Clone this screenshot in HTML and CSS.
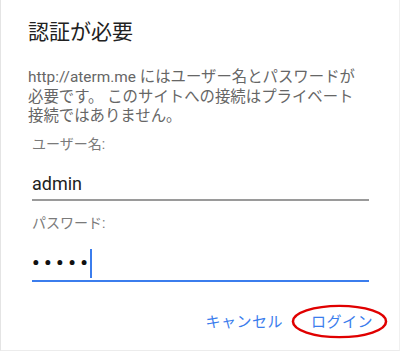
FILE: index.html
```html
<!DOCTYPE html>
<html lang="ja">
<head>
<meta charset="utf-8">
<link rel="stylesheet" href="styles.css">
</head>
<body>
<div class="dialog">
  <h1 class="title">認証が必要</h1>
  <p class="message">http://aterm.me にはユーザー名とパスワードが<br>必要です。 このサイトへの接続はプライベート<br>接続ではありません。</p>
  <div class="field">
    <label class="label">ユーザー名:</label>
    <div class="input">admin</div>
  </div>
  <div class="field">
    <label class="label">パスワード:</label>
    <div class="input focused"><span class="dots">•••••</span><span class="caret"></span></div>
  </div>
  <div class="actions">
    <span class="btn">キャンセル</span>
    <span class="btn login">ログイン<svg class="ring" viewBox="0 0 100 38" preserveAspectRatio="none"><ellipse cx="50" cy="19" rx="48" ry="17" fill="none" stroke="#e00000" stroke-width="2.6"/></svg></span>
  </div>
</div>
</body>
</html>
```

FILE: styles.css
```css
html, body {
  margin: 0;
  padding: 0;
  background: #ffffff;
}
body {
  width: 400px;
  height: 351px;
  overflow: hidden;
  font-family: Roboto, "Noto Sans CJK JP", sans-serif;
}
.dialog {
  box-sizing: border-box;
  width: 400px;
  height: 351px;
  border-left: 1px solid #e4e4e4;
  border-right: 1px solid #f0f0f0;
  border-bottom: 1px solid #ececec;
  padding: 17px 26px 0 27px;
}
.title {
  margin: 0;
  font-size: 21px;
  font-weight: 400;
  line-height: 30px;
  color: #212121;
}
.message {
  margin: 21px 0 0 0;
  font-size: 15.4px;
  line-height: 19.5px;
  color: #666666;
  white-space: nowrap;
}
.field {
  padding-left: 4px;
  padding-right: 4px;
}
.label {
  display: block;
  margin-top: 7px;
  font-size: 14px;
  line-height: 20px;
  color: #7a7a7a;
}
.input {
  margin-top: 18px;
  height: 27px;
  font-size: 18px;
  line-height: 24px;
  color: #212121;
  border-bottom: 2px solid #9a9a9a;
}
.field + .field .label {
  margin-top: 12px;
}
.input.focused {
  margin-top: 13px;
  height: 34px;
  line-height: 34px;
  border-bottom: 2px solid #3b7ded;
}
.dots {
  font-size: 21px;
  font-weight: 700;
  letter-spacing: 4.5px;
  color: #111111;
}
.caret {
  display: inline-block;
  width: 2px;
  height: 29px;
  background: #3b7ded;
  vertical-align: -8px;
  margin-left: -2px;
}
.actions {
  display: flex;
  justify-content: flex-end;
  gap: 28px;
  margin-top: 30px;
}
.btn {
  position: relative;
  font-size: 15px;
  line-height: 20px;
  color: #3b7ded;
  letter-spacing: 0.5px;
}
.ring {
  position: absolute;
  left: -20px;
  top: -8px;
  width: 97px;
  height: 35px;
}
```
